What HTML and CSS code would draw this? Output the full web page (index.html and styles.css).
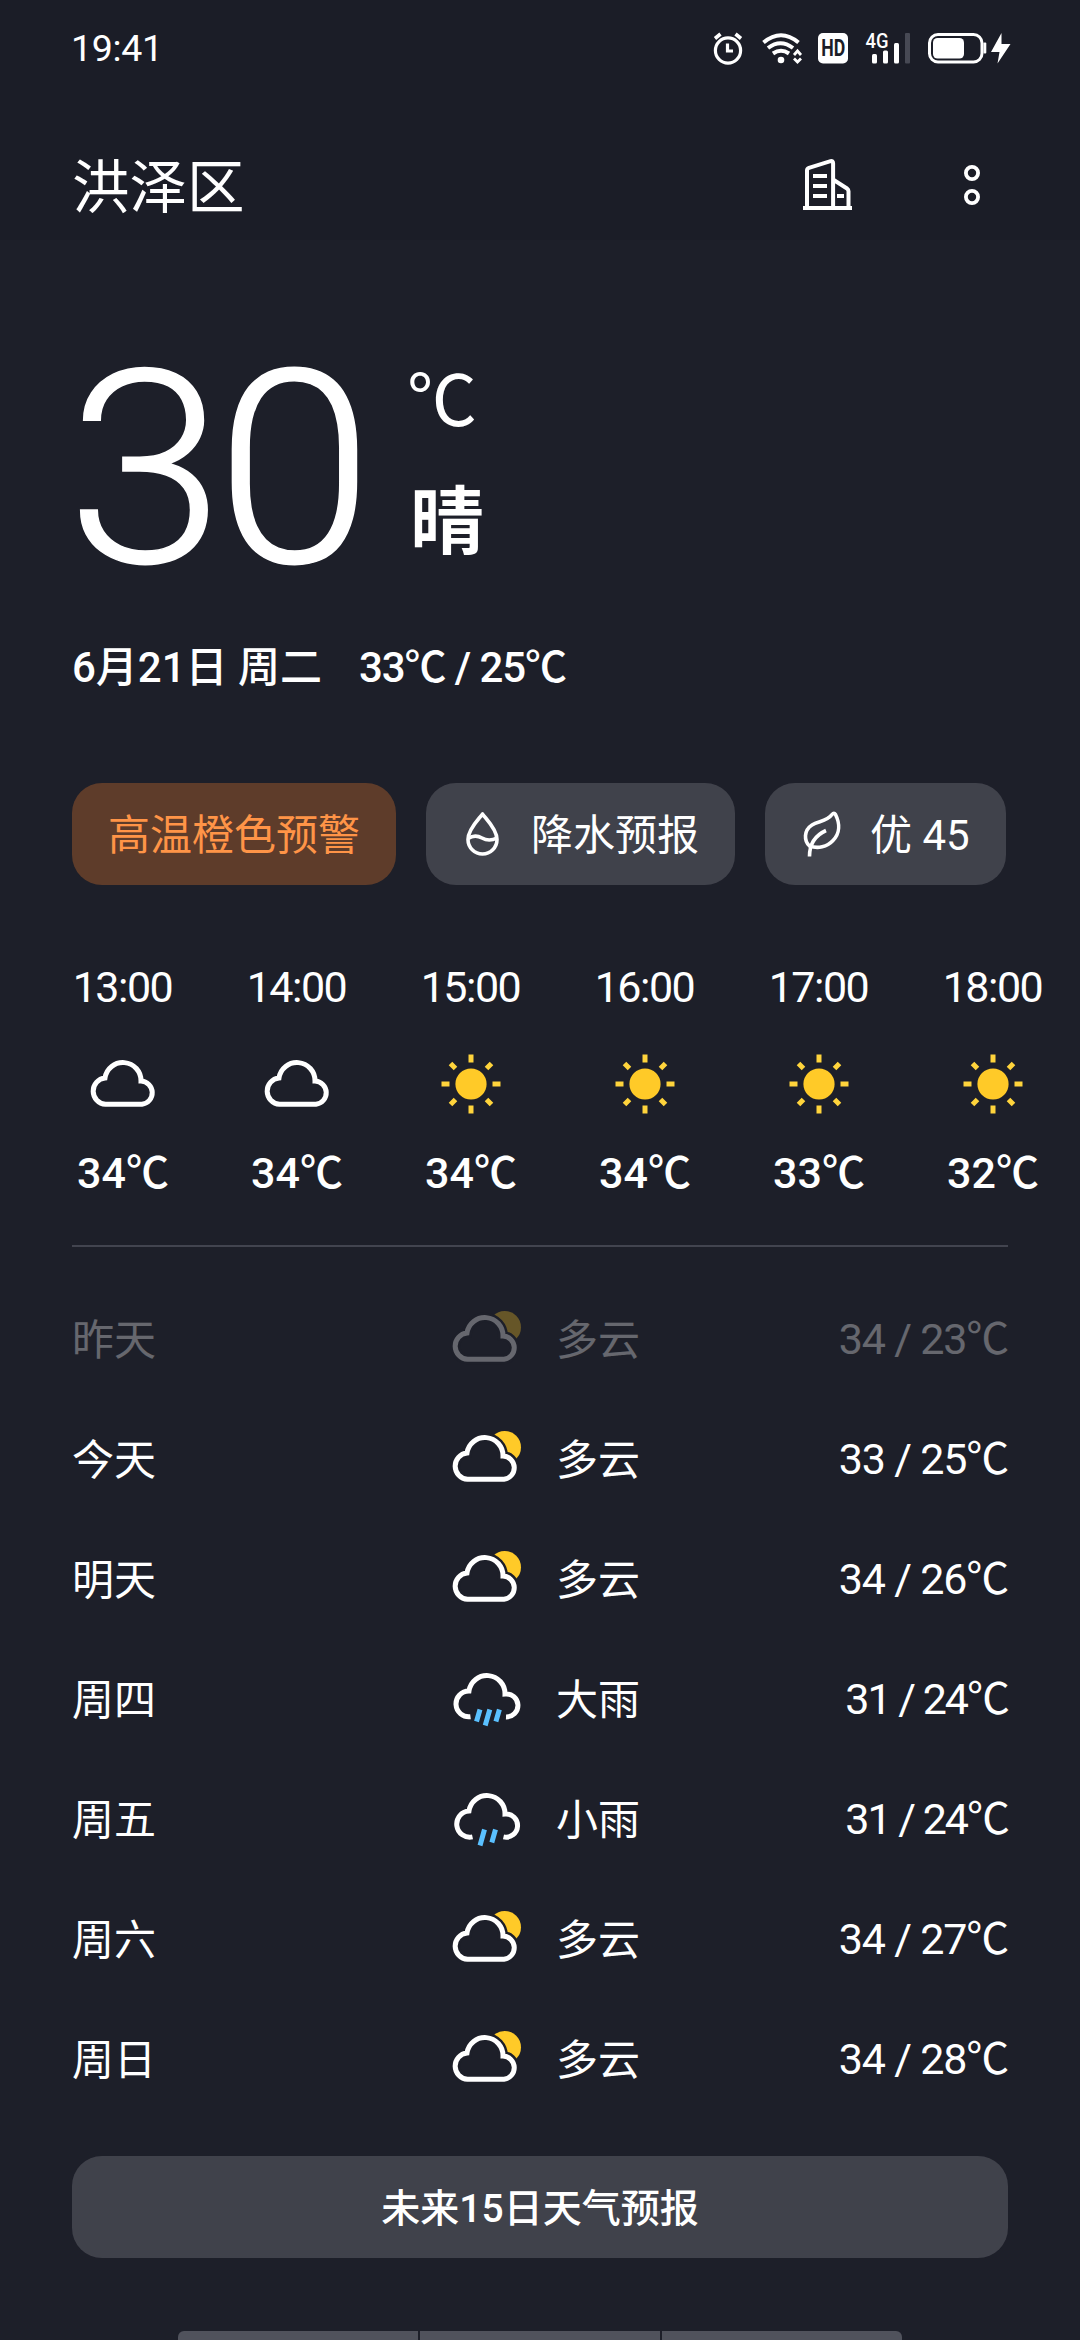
FILE: index.html
```html
<!DOCTYPE html>
<html lang="zh-CN">
<head>
    <meta charset="UTF-8">
    <meta name="viewport" content="width=device-width, initial-scale=1.0">
    <title>天气</title>
    <link rel="stylesheet" href="styles.css">
</head>
<body>
    <!-- shared weather icons -->
    <svg class="sprite" width="0" height="0">
        <symbol id="cloud-line" viewBox="0 0 72 60">
            <path d="M18.5 50.3A13.2 13.2 0 0 1 18 24A18.1 18.1 0 0 1 54 27A11.7 11.7 0 0 1 55 50.3Z" stroke="#fff" stroke-width="5"/>
        </symbol>
        <symbol id="sun" viewBox="0 0 72 60">
            <circle cx="36" cy="30" r="15.6" fill="#ffca28"/>
            <path d="M36 .5v8M36 51.5v8M6.5 30h8M57.5 30h8M15.5 9.5l5 5M51.5 45.5l5 5M56.5 9.5l-5 5M20.5 45.5l-5 5" stroke="#ffd43c" stroke-width="5"/>
        </symbol>
        <symbol id="cloudy" viewBox="0 0 72 60">
            <circle cx="54.7" cy="18.3" r="16.3" fill="#ffca28"/>
            <g transform="translate(-1 0)">
                <path d="M18.5 50.3A13.2 13.2 0 0 1 18 24A18.1 18.1 0 0 1 54 27A11.7 11.7 0 0 1 55 50.3Z" fill="#1d1f29" stroke="#1d1f29" stroke-width="10"/>
                <path d="M18.5 50.3A13.2 13.2 0 0 1 18 24A18.1 18.1 0 0 1 54 27A11.7 11.7 0 0 1 55 50.3Z" stroke="#fff" stroke-width="5"/>
            </g>
        </symbol>
        <symbol id="heavy-rain" viewBox="0 0 72 60">
            <path d="M20.5 47.7A12.9 12.9 0 1 1 19 22A18.1 18.1 0 0 1 55 25A11.5 11.5 0 1 1 56 47.9" stroke="#fff" stroke-width="5"/>
            <path d="M30 40.5l-3.5 12M39.8 40.5l-4.6 16M49.4 40.5l-3.5 12" stroke="#5ac0ff" stroke-width="5"/>
        </symbol>
        <symbol id="light-rain" viewBox="0 0 72 60">
            <path d="M22.5 47.9A13.1 13.1 0 1 1 19 22A18.1 18.1 0 0 1 55 25A11.6 11.6 0 1 1 53.5 47.9" stroke="#fff" stroke-width="5"/>
            <path d="M34.5 40.5l-4.5 16M45.5 40.5l-3.7 13" stroke="#5ac0ff" stroke-width="5"/>
        </symbol>
    </svg>

    <div class="screen">
        <header class="top">
            <div class="status">
                <span class="clock">19:41</span>
                <svg width="300" height="56" viewBox="712 21 300 56" fill="none">
                    <g stroke="#fff" stroke-width="3.2">
                        <circle cx="728" cy="50.5" r="12.6"/>
                        <path d="M715 38.5l5.5-4.5M741 38.5l-5.5-4.5" stroke-width="3.6"/>
                        <path d="M727.5 43.5v7.5h5.5"/>
                    </g>
                    <g stroke="#fff" stroke-width="4">
                        <path d="M763.5 42.5q17.5-14.5 35 0"/>
                        <path d="M768 48q12.5-9.5 25 0"/>
                        <path d="M773 53.5q8-5.5 16 0"/>
                    </g>
                    <circle cx="781" cy="60" r="3.3" fill="#fff"/>
                    <path d="M794 55l3.5-4l3.5 4M794 58.5l3.5 3.5l3.5-3.5" stroke="#fff" stroke-width="2.8"/>
                    <rect x="818" y="33" width="30" height="30.5" rx="5" fill="#fff"/>
                    <text class="hd" x="833.2" y="56" text-anchor="middle" textLength="24" lengthAdjust="spacingAndGlyphs">HD</text>
                    <text class="net" x="865.5" y="47.8" textLength="23" lengthAdjust="spacingAndGlyphs">4G</text>
                    <rect x="872" y="54" width="5" height="9.5" rx="1.5" fill="#fff"/>
                    <rect x="883" y="50.5" width="5" height="13" rx="1.5" fill="#fff"/>
                    <rect x="894" y="43" width="5" height="20.5" rx="1.5" fill="#fff"/>
                    <rect x="905" y="33" width="5" height="30.5" rx="1" fill="#474954"/>
                    <rect x="929.5" y="34.5" width="52.5" height="27.5" rx="8.5" stroke="#fff" stroke-width="3"/>
                    <rect x="933" y="38" width="31" height="20.5" rx="4.5" fill="#fff"/>
                    <rect x="983.5" y="42.5" width="2.8" height="11" rx="1" fill="#fff"/>
                    <path d="M1001.5 33L991 52h8.5l-2 11.5L1010.5 44h-9z" fill="#fff"/>
                </svg>
            </div>
            <div class="title-bar">
                <h1>洪泽区</h1>
                <div class="actions">
                    <svg width="50" height="54" viewBox="803 157 50 54" fill="none" stroke="#fff" stroke-width="4">
                        <path d="M807 207v-37.5q0-2 2-2.7l21.5-6.6q2.6-.5 2.6 2v44.8M833 178.5l14 9q1.5 1 1.5 2.8v16.7"/>
                        <path d="M803 207h49M813 175h14M813 185h14M813 195h14M837 195h7"/>
                    </svg>
                    <svg width="18" height="44" viewBox="963 162 18 44" fill="none" stroke="#fff" stroke-width="3.8">
                        <circle cx="972" cy="172" r="6.1"/>
                        <circle cx="972" cy="196" r="6.1"/>
                    </svg>
                </div>
            </div>
        </header>

        <section class="now">
            <div class="temp">30</div>
            <div class="side">
                <span class="unit">℃</span>
                <span class="sky">晴</span>
            </div>
        </section>
        <p class="date"><span>6月21日 周二</span><span class="minmax">33℃ / 25℃</span></p>

        <div class="chips">
            <div class="chip warn"><span>高温橙色预警</span></div>
            <div class="chip">
                <svg width="42" height="48" viewBox="0 0 42 48" fill="none" stroke="#fff" stroke-width="3.6">
                    <path d="M20.5 4C17 9 6 19 6 29.5a14.5 14.5 0 0 0 29 0C35 19 24 9 20.5 4z" stroke-linejoin="round"/>
                    <path d="M6 28.5q7-4.5 14-.5t15 0"/>
                </svg>
                <span>降水预报</span>
            </div>
            <div class="chip">
                <svg width="42" height="48" viewBox="0 0 42 48" fill="none" stroke="#fff" stroke-width="3.6" stroke-linejoin="round">
                    <path d="M8.5 36C3 31 2.5 20.5 11 15c6-4 15-3.5 20-10.5q2-2.5 3.5 0c4.5 9 4.5 19-2.5 26-6 6.5-15 8.5-23.5 5.5z"/>
                    <path d="M25 20.5C15 25 8.5 33 8.500 46.5"/>
                </svg>
                <span>优 45</span>
            </div>
        </div>

        <section class="hours">
            <div class="hour"><span>13:00</span><svg><use href="#cloud-line"/></svg><b>34℃</b></div>
            <div class="hour"><span>14:00</span><svg><use href="#cloud-line"/></svg><b>34℃</b></div>
            <div class="hour"><span>15:00</span><svg><use href="#sun"/></svg><b>34℃</b></div>
            <div class="hour"><span>16:00</span><svg><use href="#sun"/></svg><b>34℃</b></div>
            <div class="hour"><span>17:00</span><svg><use href="#sun"/></svg><b>33℃</b></div>
            <div class="hour"><span>18:00</span><svg><use href="#sun"/></svg><b>32℃</b></div>
        </section>

        <section class="days">
            <div class="day past"><span class="name">昨天</span><svg><use href="#cloudy"/></svg><span class="name">多云</span><span class="range">34 / 23℃</span></div>
            <div class="day"><span class="name">今天</span><svg><use href="#cloudy"/></svg><span class="name">多云</span><span class="range">33 / 25℃</span></div>
            <div class="day"><span class="name">明天</span><svg><use href="#cloudy"/></svg><span class="name">多云</span><span class="range">34 / 26℃</span></div>
            <div class="day"><span class="name">周四</span><svg><use href="#heavy-rain"/></svg><span class="name">大雨</span><span class="range tight">31 / 24℃</span></div>
            <div class="day"><span class="name">周五</span><svg><use href="#light-rain"/></svg><span class="name">小雨</span><span class="range tight">31 / 24℃</span></div>
            <div class="day"><span class="name">周六</span><svg><use href="#cloudy"/></svg><span class="name">多云</span><span class="range">34 / 27℃</span></div>
            <div class="day"><span class="name">周日</span><svg><use href="#cloudy"/></svg><span class="name">多云</span><span class="range">34 / 28℃</span></div>
        </section>

        <button class="more">未来15日天气预报</button>

        <div class="gesture"><i></i><i></i><i></i></div>
    </div>
</body>
</html>
```
FILE: styles.css
```css
* {
    box-sizing: border-box;
}
body {
    margin: 0;
    background: #1d1f29;
    color: #fff;
    font-family: Roboto, "Noto Sans CJK SC", sans-serif;
    font-size: 42px;
    line-height: 60px;
}
.sprite {
    position: absolute;
}
.screen {
    width: 1080px;
    height: 2340px;
    overflow: hidden;
    display: flex;
    flex-direction: column;
}
.screen svg {
    display: block;
    flex: none;
}
.top {
    height: 240px;
    background: #1b1d27;
}

/* status bar */
.status {
    height: 98px;
    padding: 0 68px 0 71px;
    display: flex;
    align-items: center;
    justify-content: space-between;
}
.clock {
    font-size: 37.5px;
    line-height: 40px;
    letter-spacing: -0.3px;
    margin-top: -2px;
}
.hd {
    font-size: 24px;
    font-weight: 700;
    fill: #1b1d27;
}
.net {
    font-size: 20px;
    font-weight: 500;
    fill: #fff;
}

.title-bar {
    height: 142px;
    padding: 32px 99px 0 72px;
    display: flex;
    align-items: center;
    justify-content: space-between;
}
h1 {
    margin: 7px 0 0;
    font-size: 57.5px;
    font-weight: 400;
    line-height: 80px;
}
.actions {
    display: flex;
    align-items: center;
    gap: 110px;
}

/* current weather */
.now {
    display: flex;
    padding: 126px 0 0 72px;
}
.temp {
    width: 340px;
    margin-left: -5px;
    font-size: 270px;
    font-weight: 300;
    line-height: 208px;
    letter-spacing: -8px;
    -webkit-text-stroke: 1.5px #fff;
    transform: scaleX(1.05);
    transform-origin: left;
}
.side {
    display: flex;
    flex-direction: column;
}
.unit {
    font-size: 70px;
    line-height: 73px;
}
.sky {
    margin-top: 40px;
    padding-left: 3px;
    font-size: 74px;
    font-weight: 700;
    line-height: 88px;
}
.date {
    margin: 64px 0 0;
    padding-left: 72px;
    display: flex;
    gap: 37px;
    font-weight: 500;
}
.minmax {
    letter-spacing: -1.1px;
}

.chips {
    margin-top: 85px;
    padding-left: 72px;
    display: flex;
    gap: 30px;
}
.chip {
    height: 102px;
    padding: 0 36px;
    display: flex;
    align-items: center;
    gap: 27px;
    border-radius: 30px;
    background: #40424b;
    white-space: nowrap;
}
.chip span {
    padding-top: 4px;
}
.warn {
    background: #5e3c2a;
    color: #ff9447;
}

/* hourly forecast */
.hours {
    margin: 77px 72px 0;
    display: flex;
    height: 285px;
    border-bottom: 2px solid #42444f;
}
.hour {
    flex: none;
    width: 174px;
    margin-left: -36px;
    margin-right: 36px;
    display: flex;
    flex-direction: column;
    align-items: center;
    line-height: 50px;
}
.hour span {
    font-size: 43px;
    letter-spacing: -1.5px;
    padding-right: 1px;
}
.hour svg {
    width: 72px;
    height: 60px;
    margin: 42px 0 34px;
}
.hour b {
    font-size: 43px;
    font-weight: 500;
}
.hour svg, .day svg {
    fill: none;
}

/* daily forecast */
.days {
    margin: 32px 72px 0;
}
.day {
    height: 120px;
    display: grid;
    grid-template-columns: 378px 106px 1fr auto;
    align-items: center;
}
.day svg {
    width: 72px;
    height: 60px;
}
.name {
    padding-top: 3px;
}
.range {
    font-size: 43px;
    letter-spacing: -1.2px;
}
.tight {
    letter-spacing: -2px;
}
.past {
    opacity: 0.32;
}

.more {
    margin: 37px 72px 0;
    padding: 4px 0 0;
    height: 102px;
    flex: none;
    border: none;
    border-radius: 30px;
    background: #40424b;
    color: #fff;
    font-family: inherit;
    font-size: 39px;
    font-weight: 500;
    line-height: 60px;
}

.gesture {
    margin: auto auto 0;
    width: 724px;
    height: 9px;
    display: flex;
    gap: 2px;
    border-radius: 6px 6px 0 0;
    overflow: hidden;
}
.gesture i {
    flex: 1;
    background: #50525c;
}
```
